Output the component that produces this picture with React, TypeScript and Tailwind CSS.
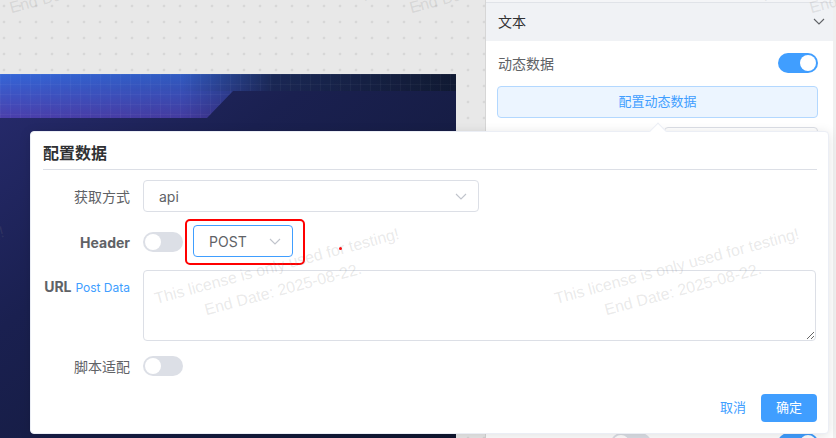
import React from 'react';

const watermarks = [
  { x: -115, y: -24 },
  { x: 85, y: -24 },
  { x: 485, y: -24 },
  { x: 885, y: -24 },
  { x: -115, y: 276 },
  { x: 280, y: 278 },
  { x: 680, y: 278 },
];

function Chevron({ color = '#c0c4cc' }: { color?: string }) {
  return (
    <svg width="12" height="7" viewBox="0 0 12 7" fill="none">
      <polyline points="1,1 6,6 11,1" stroke={color} strokeWidth="1.1" />
    </svg>
  );
}

function Toggle({ on }: { on?: boolean }) {
  return (
    <span
      className={`flex h-5 w-10 shrink-0 items-center rounded-full p-[2px] ${
        on ? 'justify-end bg-[#409eff]' : 'justify-start bg-[#dcdfe6]'
      }`}
    >
      <span className="h-4 w-4 rounded-full bg-white" />
    </span>
  );
}

// banner of the dashboard being edited on the canvas
function Banner() {
  return (
    <svg width="456" height="364" viewBox="0 0 456 364" className="block">
      <defs>
        <linearGradient id="body" x1="0" y1="0" x2="1" y2="1">
          <stop offset="0" stopColor="#272b6e" />
          <stop offset="0.35" stopColor="#1a2050" />
          <stop offset="1" stopColor="#0f1730" />
        </linearGradient>
        <linearGradient id="bandV" x1="0" y1="0" x2="0" y2="1">
          <stop offset="0" stopColor="#3466d8" />
          <stop offset="1" stopColor="#4b3fab" />
        </linearGradient>
        <linearGradient id="fade" x1="0" y1="0" x2="1" y2="0">
          <stop offset="0" stopColor="#fff" stopOpacity="1" />
          <stop offset="0.4" stopColor="#fff" stopOpacity="0.85" />
          <stop offset="0.6" stopColor="#fff" stopOpacity="0.15" />
          <stop offset="1" stopColor="#fff" stopOpacity="0" />
        </linearGradient>
        <mask id="fadeMask">
          <rect width="456" height="44" fill="url(#fade)" />
        </mask>
        <pattern id="grid" width="10" height="10" patternUnits="userSpaceOnUse">
          <path d="M10 0 L0 0 0 10" fill="none" stroke="rgba(255,255,255,0.07)" strokeWidth="1" />
        </pattern>
        <linearGradient id="topR" x1="0" y1="0" x2="1" y2="0">
          <stop offset="0" stopColor="#1b2350" />
          <stop offset="1" stopColor="#111a33" />
        </linearGradient>
      </defs>
      <rect width="456" height="364" fill="url(#body)" />
      <rect x="0" y="0" width="456" height="17" fill="url(#topR)" />
      <polygon
        points="0,0 456,0 456,17 233,17 207,44 0,44"
        fill="url(#bandV)"
        mask="url(#fadeMask)"
      />
      <polygon points="0,0 456,0 456,17 233,17 207,44 0,44" fill="url(#grid)" />
    </svg>
  );
}

export default function App() {
  return (
    <div className="relative h-[438px] w-[836px] overflow-hidden bg-[#e8e8e8] font-['Inter','Noto_Sans_CJK_SC',sans-serif]">
      <div className="flex h-full">
        {/* 画布 */}
        <div className="h-full w-[485px] shrink-0 bg-[radial-gradient(circle,#d7d7d7_1.5px,transparent_1.6px)] bg-[length:16px_16px] bg-[position:-4px_-2px] pt-[74px]">
          <Banner />
        </div>

        {/* 右侧属性面板 */}
        <div className="flex h-full w-[348px] shrink-0 flex-col overflow-hidden border-l border-[#d6d6d6] bg-white">
          <div className="h-[3px] shrink-0 border-b border-[#e0e3e8] bg-[#f4f5f7]" />
          <div className="flex h-[38px] shrink-0 items-center justify-between bg-[#f0f2f5] pb-[2px] pl-[12px] pr-[8px]">
            <span className="text-[14px] text-[#303133]">文本</span>
            <Chevron color="#606266" />
          </div>
          <div className="shrink-0 pl-[11px] pr-[15px] pt-[12px]">
            <div className="flex h-5 items-center justify-between">
              <span className="pl-px text-[14px] text-[#606266]">动态数据</span>
              <Toggle on />
            </div>
            <button className="mt-[13px] flex h-[32px] w-full items-center justify-center rounded-[4px] border border-[#b3d8ff] bg-[#ecf5ff] text-[13px] text-[#409eff]">
              配置动态数据
            </button>
            <div className="mt-[9px] flex justify-end">
              <div className="h-[32px] w-[154px] rounded-[4px] border border-[#dcdfe6]" />
            </div>
            <div className="mt-[274px] flex items-center justify-between pl-[114px]">
              <Toggle />
              <Toggle on />
            </div>
          </div>
        </div>
        <div className="flex-1 bg-[#f0f0f0]" />
      </div>

      {/* 配置数据弹窗 */}
      <div className="absolute left-[30px] top-[131px] flex h-[303px] w-[799px] flex-col rounded-[4px] border border-[#ebeef5] bg-white pl-[12px] pr-[11px] shadow-[0_2px_12px_rgba(0,0,0,0.12)]">
        <span className="absolute left-[621px] top-[-7px] h-[12px] w-[12px] rotate-45 border-l border-t border-[#ebeef5] bg-white" />
        <div className="border-b border-[#dcdfe6] pb-[5px] pt-[10px] text-[16px] font-semibold leading-[22px] text-[#303133]">
          配置数据
        </div>

        <div className="mt-[10px] flex items-center">
          <label className="w-[87px] text-right text-[14px] text-[#606266]">获取方式</label>
          <div className="ml-[13px] flex h-[32px] w-[336px] items-center justify-between rounded-[4px] border border-[#dcdfe6] pl-[15px] pr-[11px] text-[14px] text-[#606266]">
            <span>api</span>
            <Chevron />
          </div>
        </div>

        <div className="mt-[7px] flex items-center">
          <label className="w-[87px] text-right text-[14px] font-bold text-[#606266]">Header</label>
          <div className="ml-[13px]">
            <Toggle />
          </div>
          <div className="ml-[2px] h-[46px] w-[120px] rounded-[5px] border-2 border-[#ff0000] pl-[6px] pt-[4px]">
            <div className="flex h-[32px] w-[100px] items-center justify-between rounded-[4px] border border-[#409eff] pl-[15px] pr-[11px] text-[14px] text-[#606266]">
              <span>POST</span>
              <Chevron />
            </div>
          </div>
          <span className="ml-[34px] mt-[13px] h-[3px] w-[3px] rounded-full bg-[#ff0000]" />
        </div>

        <div className="mt-[5px] flex items-start">
          <label className="w-[87px] pt-[8px] text-right text-[14px] leading-[18px]">
            <span className="font-bold text-[#606266]">URL</span>{' '}
            <span className="text-[12px] text-[#409eff]">Post Data</span>
          </label>
          <textarea className="ml-[13px] h-[71px] w-[673px] resize-y rounded-[4px] border border-[#dcdfe6] outline-none" />
        </div>

        <div className="mt-[9px] flex h-[32px] items-center">
          <label className="w-[87px] text-right text-[14px] text-[#606266]">脚本适配</label>
          <div className="ml-[13px]">
            <Toggle />
          </div>
        </div>

        <div className="mt-[12px] flex items-center justify-end gap-[15px]">
          <button className="text-[13px] text-[#409eff]">取消</button>
          <button className="h-[28px] w-[56px] rounded-[4px] bg-[#409eff] text-[13px] text-white">确定</button>
        </div>
      </div>

      {/* 水印 */}
      <div className="pointer-events-none absolute inset-0">
        {watermarks.map((w, i) => (
          <div
            key={i}
            className="absolute -translate-x-1/2 -translate-y-1/2 rotate-[-15deg] whitespace-nowrap text-center font-['Liberation_Sans',Arial,sans-serif] text-[16px] leading-[24px] text-[rgba(128,128,128,0.18)]"
            style={{ left: w.x, top: w.y }}
          >
            <div>This license is only used for testing!</div>
            <div>End Date: 2025-08-22.</div>
          </div>
        ))}
      </div>
    </div>
  );
}
